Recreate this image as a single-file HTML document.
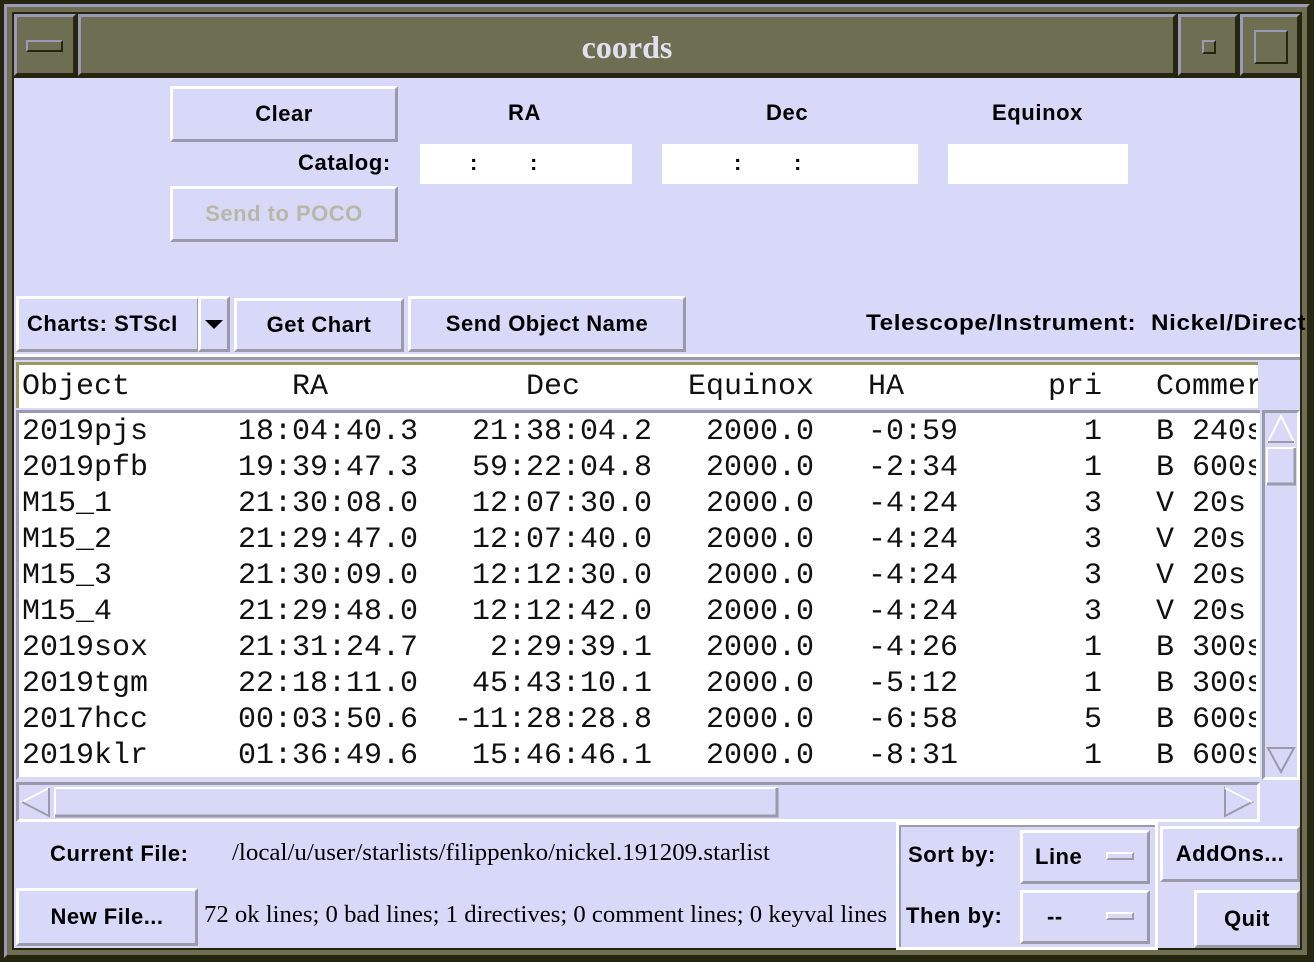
<!DOCTYPE html>
<html><head><meta charset="utf-8"><style>
*{margin:0;padding:0;box-sizing:border-box}
body{width:1314px;height:962px;background:#262610;position:relative;overflow:hidden;font-family:"Liberation Sans",sans-serif}
.a{position:absolute}
.olive{background:#6e6e52}
.bev{border-top:3px solid #9a9ab8;border-left:3px solid #9a9ab8;border-right:3px solid #262610;border-bottom:3px solid #262610}
.btn{position:absolute;background:#d8d8f8;border-top:3px solid #fff;border-left:3px solid #fff;border-right:3px solid #9a9aa8;border-bottom:3px solid #9a9aa8;font-weight:bold;font-size:22px;letter-spacing:0.5px;display:flex;align-items:center;justify-content:center;color:#000;white-space:nowrap}
.lbl{position:absolute;font-weight:bold;font-size:22px;letter-spacing:0.6px;white-space:nowrap;color:#000}
.inp{position:absolute;background:#fff}
.m{position:absolute;font-family:"Liberation Mono",monospace;font-size:30px;white-space:pre;line-height:36px;color:#111}
.r{text-align:right}
.sq{display:inline-block;transform-origin:left center}
</style></head><body>
<div class="a olive" style="left:4px;top:4px;width:1306px;height:954px;border:3px solid #9a9ab8;border-right-color:#262610;border-bottom-color:#262610"></div>
<div class="a" style="left:12px;top:12px;width:1290px;height:938px;background:#262610"></div>
<div class="a olive bev" style="left:14px;top:14px;width:62px;height:62px"></div>
<div class="a" style="left:26px;top:40px;width:37px;height:12px;border:2px solid #9a9ab8;border-right-color:#262610;border-bottom-color:#262610"></div>
<div class="a olive bev" style="left:78px;top:14px;width:1098px;height:62px;color:#e0e0f0;font-family:'Liberation Serif',serif;font-weight:bold;font-size:32px;text-align:center;line-height:60px">coords</div>
<div class="a olive bev" style="left:1178px;top:14px;width:60px;height:62px"></div>
<div class="a" style="left:1202px;top:40px;width:14px;height:14px;border:2px solid #9a9ab8;border-right-color:#262610;border-bottom-color:#262610"></div>
<div class="a olive bev" style="left:1240px;top:14px;width:60px;height:62px"></div>
<div class="a" style="left:1254px;top:30px;width:34px;height:34px;border:2px solid #9a9ab8;border-right-color:#262610;border-bottom-color:#262610"></div>
<div class="a" style="left:14px;top:78px;width:1286px;height:870px;background:#d8d8f8"></div>

<div class="btn" style="left:170px;top:86px;width:228px;height:56px">Clear</div>
<div class="lbl" style="left:298px;top:150px">Catalog:</div>
<div class="btn" style="left:170px;top:186px;width:228px;height:56px;color:#b8b8a8">Send to POCO</div>
<div class="lbl" style="left:508px;top:100px">RA</div>
<div class="lbl" style="left:766px;top:100px">Dec</div>
<div class="lbl" style="left:992px;top:100px">Equinox</div>
<div class="inp" style="left:420px;top:144px;width:212px;height:40px"></div>
<div class="inp" style="left:662px;top:144px;width:256px;height:40px"></div>
<div class="inp" style="left:948px;top:144px;width:180px;height:40px"></div>
<div class="lbl" style="left:470px;top:150px">:</div><div class="lbl" style="left:530px;top:150px">:</div>
<div class="lbl" style="left:734px;top:150px">:</div><div class="lbl" style="left:794px;top:150px">:</div>

<div class="btn" style="left:16px;top:296px;width:184px;height:56px;justify-content:flex-start;padding-left:8px">Charts: STScI</div>
<div class="btn" style="left:198px;top:296px;width:32px;height:56px"><svg width="20" height="14"><path d="M1 3H19L10 12Z" fill="#000"/></svg></div>
<div class="btn" style="left:234px;top:298px;width:170px;height:54px">Get Chart</div>
<div class="btn" style="left:408px;top:296px;width:278px;height:56px">Send Object Name</div>
<div class="lbl" style="left:866px;top:310px"><span class="sq" style="transform:scaleX(1.1)">Telescope/Instrument:&nbsp; Nickel/Direct</span></div>

<div class="a" style="left:14px;top:354px;width:1286px;height:3px;background:#fff"></div>
<div class="a" style="left:14px;top:357px;width:1286px;height:3px;background:#9a9aa8"></div>

<div class="a" style="left:16px;top:362px;width:1242px;height:46px;background:#fff;border-top:3px solid #9a9a60;border-left:3px solid #9a9a60"></div>
<div class="m" style="left:22px;top:369px">Object</div>
<div class="m" style="left:292px;top:369px">RA</div>
<div class="m" style="left:526px;top:369px">Dec</div>
<div class="m" style="left:688px;top:369px">Equinox</div>
<div class="m" style="left:868px;top:369px">HA</div>
<div class="m" style="left:1048px;top:369px">pri</div>
<div class="m" style="left:1156px;top:369px;width:102px;overflow:hidden">Commer</div>
<div class="a" style="left:16px;top:410px;width:1244px;height:370px;background:#fff;border-top:3px solid #9a9aa8;border-left:3px solid #9a9aa8;border-bottom:3px solid #d8d8f8"></div>
<div class="m" style="left:22px;top:414px">2019pjs
2019pfb
M15_1
M15_2
M15_3
M15_4
2019sox
2019tgm
2017hcc
2019klr</div>
<div class="m r" style="left:218px;top:414px;width:200px">18:04:40.3
19:39:47.3
21:30:08.0
21:29:47.0
21:30:09.0
21:29:48.0
21:31:24.7
22:18:11.0
00:03:50.6
01:36:49.6</div>
<div class="m r" style="left:420px;top:414px;width:232px">21:38:04.2
59:22:04.8
12:07:30.0
12:07:40.0
12:12:30.0
12:12:42.0
2:29:39.1
45:43:10.1
-11:28:28.8
15:46:46.1</div>
<div class="m r" style="left:660px;top:414px;width:154px">2000.0
2000.0
2000.0
2000.0
2000.0
2000.0
2000.0
2000.0
2000.0
2000.0</div>
<div class="m r" style="left:820px;top:414px;width:138px">-0:59
-2:34
-4:24
-4:24
-4:24
-4:24
-4:26
-5:12
-6:58
-8:31</div>
<div class="m r" style="left:1000px;top:414px;width:102px">1
1
3
3
3
3
1
1
5
1</div>
<div class="m" style="left:1156px;top:414px;width:100px;overflow:hidden">B 240s
B 600s
V 20s
V 20s
V 20s
V 20s
B 300s
B 300s
B 600s
B 600s</div>
<div class="a" style="left:1262px;top:410px;width:38px;height:370px;background:#d8d8f8;border-top:3px solid #9a9aa8;border-left:3px solid #9a9aa8;border-right:3px solid #fff;border-bottom:3px solid #fff"></div>
<svg class="a" style="left:1266px;top:414px" width="30" height="362"><path d="M15 2L28 28H2Z" fill="none" stroke="#fff" stroke-width="2"/><path d="M2 28H28" stroke="#9a9aa8" stroke-width="2"/><rect x="1" y="34" width="28" height="36" fill="none" stroke="#fff" stroke-width="2"/><path d="M29 34V70H1" fill="none" stroke="#9a9aa8" stroke-width="3"/><path d="M2 334H28L15 358Z" fill="none" stroke="#9a9aa8" stroke-width="2"/></svg>
<div class="a" style="left:16px;top:782px;width:1244px;height:40px;background:#d8d8f8;border-top:3px solid #9a9aa8;border-left:3px solid #9a9aa8;border-right:3px solid #fff;border-bottom:3px solid #fff"></div>
<svg class="a" style="left:19px;top:785px" width="1238" height="34"><path d="M30 3L3 17L30 31" fill="none" stroke="#fff" stroke-width="2"/><path d="M3 17L30 31V3" fill="none" stroke="#9a9aa8" stroke-width="2"/><rect x="36" y="3" width="722" height="28" fill="none" stroke="#fff" stroke-width="2"/><path d="M758 3V31H36" fill="none" stroke="#9a9aa8" stroke-width="3"/><path d="M1206 3L1233 17L1206 31Z" fill="none" stroke="#9a9aa8" stroke-width="2"/><path d="M1206 3L1233 17" stroke="#fff" stroke-width="2"/></svg>

<div class="lbl" style="left:50px;top:841px">Current File:</div>
<div class="a" style="left:232px;top:840px;font-family:'Liberation Serif',serif;font-size:24px;white-space:nowrap"><span class="sq" style="transform:scaleX(1.04)">/local/u/user/starlists/filippenko/nickel.191209.starlist</span></div>
<div class="btn" style="left:16px;top:888px;width:182px;height:58px">New File...</div>
<div class="a" style="left:204px;top:902px;font-family:'Liberation Serif',serif;font-size:24px;white-space:nowrap"><span class="sq" style="transform:scaleX(1.03)">72 ok lines; 0 bad lines; 1 directives; 0 comment lines; 0 keyval lines</span></div>
<div class="a" style="left:896px;top:822px;width:262px;height:128px;border:3px solid #fff"><div class="a" style="left:0;top:0;width:256px;height:122px;border-top:2px solid #9a9aa8;border-left:2px solid #9a9aa8"></div></div>
<div class="lbl" style="left:908px;top:842px">Sort by:</div>
<div class="lbl" style="left:906px;top:903px">Then by:</div>
<div class="btn" style="left:1020px;top:830px;width:130px;height:54px;justify-content:flex-start;padding-left:12px">Line</div>
<div class="a" style="left:1106px;top:852px;width:28px;height:8px;border:2px solid #fff;border-right-color:#9a9aa8;border-bottom-color:#9a9aa8"></div>
<div class="btn" style="left:1020px;top:890px;width:130px;height:54px;justify-content:flex-start;padding-left:24px">--</div>
<div class="a" style="left:1106px;top:912px;width:28px;height:8px;border:2px solid #fff;border-right-color:#9a9aa8;border-bottom-color:#9a9aa8"></div>
<div class="btn" style="left:1160px;top:826px;width:140px;height:56px">AddOns...</div>
<div class="btn" style="left:1194px;top:890px;width:106px;height:58px">Quit</div>
</body></html>
